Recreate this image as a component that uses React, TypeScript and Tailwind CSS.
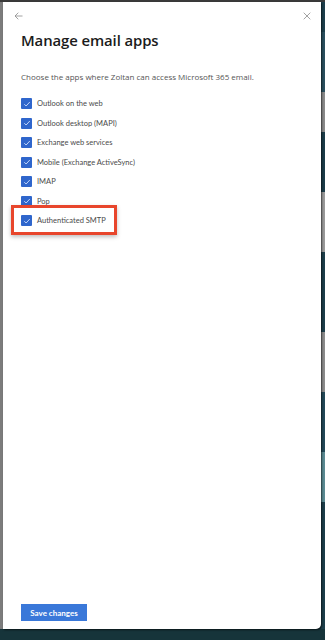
import React from "react";

const items = [
  "Outlook on the web",
  "Outlook desktop (MAPI)",
  "Exchange web services",
  "Mobile (Exchange ActiveSync)",
  "IMAP",
  "Pop",
];

function Check() {
  return (
    <span className="flex h-[11px] w-[11px] shrink-0 items-center justify-center rounded-[1px] bg-[#2f66cc]">
      <svg width="8" height="8" viewBox="0 0 8 8" fill="none">
        <path d="M1.3 4.2 L3.1 6 L6.8 2" stroke="#cfe0ff" strokeWidth="0.9" />
      </svg>
    </span>
  );
}

function Row({ label }: { label: string }) {
  return (
    <div className="flex h-[19.5px] items-center gap-[5px]">
      <Check />
      <span
        className="text-[7.5px] leading-none text-[#4a4a4a]"
        style={{ fontFamily: 'Lato, "Noto Sans", sans-serif' }}
      >
        {label}
      </span>
    </div>
  );
}

export default function App() {
  return (
    <div
      className="flex h-[640px] w-[325px] flex-col overflow-hidden bg-[#17343b]"
      style={{ fontFamily: '"Open Sans", "Noto Sans", sans-serif' }}
    >
      <div className="h-[2px] w-full shrink-0 bg-[#3a3a3a]" />
      <div className="flex h-[627px] shrink-0">
        <div className="w-[3px] shrink-0 bg-[#7c7c7c]" />
        <div className="relative flex w-[318px] flex-col rounded-br-[5px] bg-white shadow-[1px_1px_2px_rgba(0,0,0,0.6)]">
          <div className="flex h-[28px] items-center justify-between pl-[11px] pr-[10px]">
            <svg width="9" height="8" viewBox="0 0 9 8" fill="none">
              <path d="M8.5 4 H1 M4.3 0.7 L1 4 L4.3 7.3" stroke="#8a8a8a" strokeWidth="0.8" />
            </svg>
            <svg width="8" height="8" viewBox="0 0 8 8" fill="none">
              <path d="M0.7 0.7 L7.3 7.3 M7.3 0.7 L0.7 7.3" stroke="#8a8a8a" strokeWidth="0.8" />
            </svg>
          </div>
          <div className="px-[18px]">
            <h1 className="text-[14.9px] font-semibold leading-[20px] tracking-[-0.1px] text-[#1b1b1b]">
              Manage email apps
            </h1>
            <p className="mt-[23px] text-[8px] leading-[8px] text-[#555]">
              Choose the apps where Zoltan can access Microsoft 365 email.
            </p>
            <div className="mt-[13px] flex flex-col">
              {items.map((l) => (
                <Row key={l} label={l} />
              ))}
              <div className="relative">
                <Row label="Authenticated SMTP" />
                <div className="absolute left-[-10px] top-[-6px] h-[30px] w-[106px] border-[3px] border-[#e8462c] shadow-[0_2px_4px_rgba(0,0,0,0.25)]" />
              </div>
            </div>
          </div>
          <div className="mt-auto px-[18px] pb-[8px]">
            <button
              className="flex h-[17px] w-[66px] items-center justify-center bg-[#3a78d9] text-[8px] font-bold text-white"
              style={{ fontFamily: 'Lato, "Noto Sans", sans-serif' }}
            >
              Save changes
            </button>
          </div>
        </div>
        <div className="flex w-[4px] shrink-0 flex-col">
          <div className="h-[30px] bg-[#1d3f4c]" />
          <div className="h-[60px] bg-[#2a4f5e]" />
          <div className="h-[40px] bg-[#8a8a8a]" />
          <div className="h-[60px] bg-[#1b3c49]" />
          <div className="h-[60px] bg-[#9a9a9a]" />
          <div className="h-[80px] bg-[#1c3e4a]" />
          <div className="h-[60px] bg-[#8c8c8c]" />
          <div className="h-[60px] bg-[#234958]" />
          <div className="h-[50px] bg-[#5b8b93]" />
          <div className="flex-1 bg-[#1c3e4a]" />
        </div>
      </div>
      <div className="flex-1 bg-[#16343a]" />
    </div>
  );
}
